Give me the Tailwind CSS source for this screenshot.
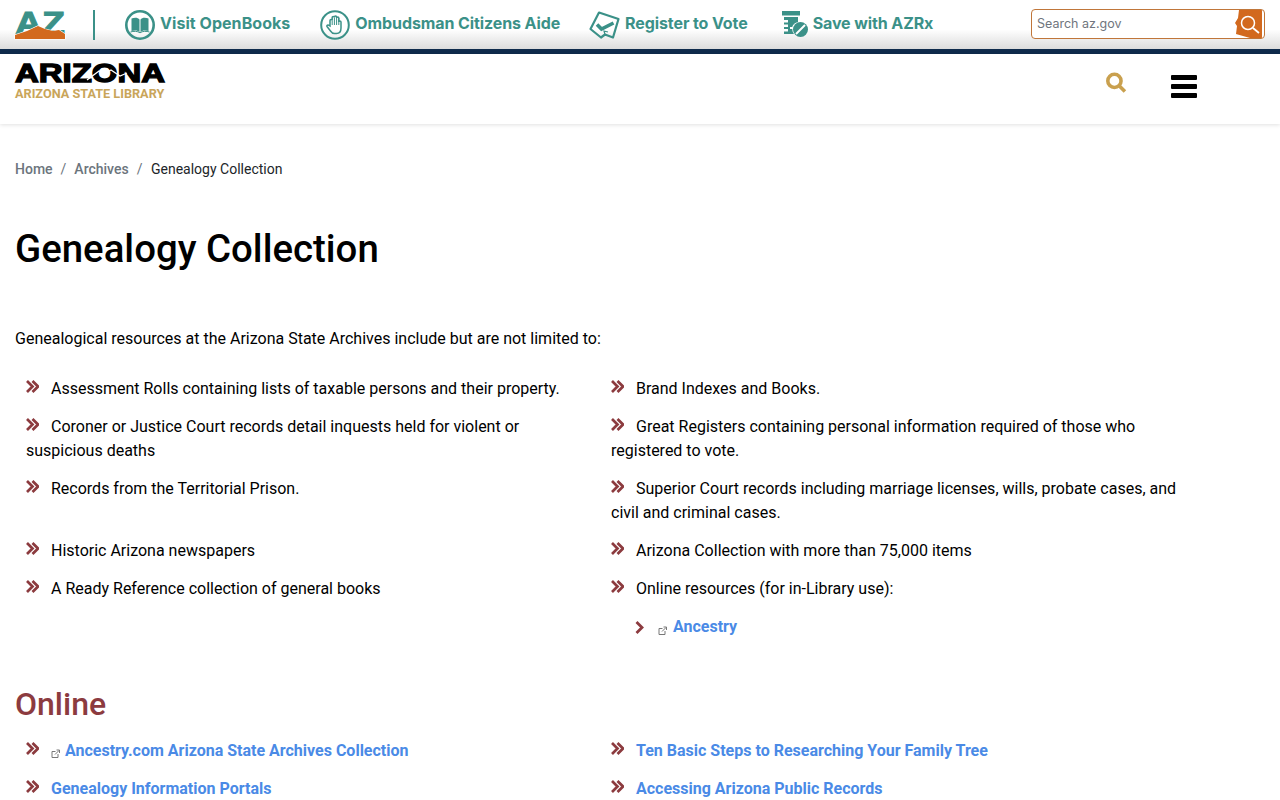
<!DOCTYPE html>
<html lang="en">
<head>
<meta charset="utf-8">
<title>Genealogy Collection</title>
<script src="https://cdn.jsdelivr.net/npm/@tailwindcss/browser@4"></script>
</head>
<body class="bg-white font-['Roboto',sans-serif] text-black overflow-hidden h-[800px]">
<div class="h-[49px] bg-gradient-to-b from-white from-60% to-[#dcdcdc] flex items-center pl-[15px] font-['Inter',sans-serif] font-bold text-[#3b9188] text-[16px] relative">
  <svg class="w-[50px] h-[28px] shrink-0 overflow-visible" viewBox="0 0 50 28">
    <text x="0" y="23" textLength="50" lengthAdjust="spacingAndGlyphs" font-family="Liberation Sans" font-weight="700" font-size="32" fill="#3b9188" stroke="#3b9188" stroke-width="1">AZ</text>
    <path d="M0 28V24L12 20 23 15 30 18 38 20 44 19 50 23V28Z" fill="#d2691e" stroke="#fff" stroke-width="1.200" paint-order="stroke"/>
  </svg>
  <div class="w-[2px] h-[30px] bg-[#3b9188] ml-[28px] mr-[30px] shrink-0"></div>
  <a class="flex items-center gap-[5px]">
    <svg class="w-[30px] h-[30px]" viewBox="0 0 30 30"><circle cx="15" cy="15" r="13.700" fill="none" stroke="#3b9188" stroke-width="2.600"/><path d="M6.500 8.500c3-1 6.500-1 8 1V22c-1.500-1.800-5-2-8-1ZM23.500 8.500c-3-1-6.500-1-8 1V22c1.500-1.800 5-2 8-1Z" fill="#3b9188"/><path d="M5.500 22c3-1 7-1 9.500.8 2.500-1.800 6.500-1.800 9.500-.8" fill="none" stroke="#3b9188" stroke-width="1"/></svg>
    <span class="mb-[3px] tracking-[0.05px]">Visit OpenBooks</span>
  </a>
  <a class="flex items-center gap-[5px] ml-[30px]">
    <svg class="w-[30px] h-[30px]" viewBox="0 0 30 30" fill="none" stroke="#3b9188"><circle cx="15" cy="15" r="13.800" stroke-width="2"/><path d="M10 16V10.500a1.100 1.100 0 0 1 2.200 0V7.500a1.100 1.100 0 0 1 2.200 0V7a1.100 1.100 0 0 1 2.200 0v1a1.100 1.100 0 0 1 2.200 0v4a1.100 1.100 0 0 1 2.200 0V18c0 3-1.500 5.500-4.500 5.500h-2c-2 0-3-1-4-2.500L7 16.500c-.7-1 1-2 2-1Z" stroke-width="1.500"/><path d="M12.200 10.500V15M14.400 7.500V15M16.600 7.500V15M18.800 8V15" stroke-width="1"/></svg>
    <span class="mb-[3px] tracking-[-0.1px]">Ombudsman Citizens Aide</span>
  </a>
  <a class="flex items-center gap-[5px] ml-[29px]">
    <svg class="w-[31px] h-[28px]" viewBox="0 0 31 28" fill="none" stroke="#3b9188"><path d="M10 1.500L29.500 8 24 26.500 16 23.500 12 26.500 1.500 18Z" stroke-width="2.200" stroke-linejoin="round"/><path d="M8 13.500l4.500 4.500 12-6" stroke-width="3.600"/><path d="M16 23.500l-1-3.500 4 1" stroke-width="1.200"/></svg>
    <span class="mb-[3px] tracking-[-0.1px]">Register to Vote</span>
  </a>
  <a class="flex items-center gap-[5px] ml-[33px]">
    <svg class="w-[27px] h-[27px]" viewBox="0 0 27 27" fill="#3b9188"><rect x="1" y="0" width="18" height="4.500"/><path d="M3 6h14v5c-3 .5-5 2.500-5.800 5H9v2h2.300c0 2 .5 3.500 1.700 5H3v-2.500h4V18H3v-2h4v-2.500H3v-2h4V9H3Z"/><circle cx="19.500" cy="18.500" r="7.500"/><path d="M15 23l9-9" stroke="#fff" stroke-width="2"/></svg>
    <span class="mb-[3px] tracking-[-0.1px]">Save with AZRx</span>
  </a>
  <div class="absolute left-[1031px] top-[9px] w-[234px] h-[30px] border border-[#c0763a] rounded-[4px] bg-white flex items-center pl-[5px] overflow-hidden font-['Inter',sans-serif] font-normal text-[12.500px] text-[#70757d]">
    <span>Search az.gov</span>
    <svg class="absolute right-[2px] top-0 w-[27px] h-[28px]" viewBox="0 0 27 28"><path d="M4 0H27V28H15L1 24 2 16 0 13 3 8Z" fill="#d2691e"/><circle cx="13" cy="13" r="6.500" fill="none" stroke="#fff" stroke-width="1.500"/><path d="M18 18l6 5" stroke="#fff" stroke-width="1.800"/></svg>
  </div>
</div>
<div class="h-[5px] bg-[#0f2b4c]"></div>
<header class="h-[70px] bg-white shadow-[0_1px_4px_rgba(0,0,0,0.12)] flex items-start pl-[15px] relative">
  <div class="pt-[9px] w-[150px]">
    <svg class="block w-[150px] h-[20px] overflow-visible" viewBox="0 0 150 20">
      <text x="0" y="19" textLength="150" lengthAdjust="spacingAndGlyphs" font-family="Liberation Sans" font-weight="700" font-size="26" stroke="#000" stroke-width="1.300" fill="#000">ARIZONA</text>
      <path d="M72 17L84 8 89 11 96 7 105 13 112 10" fill="none" stroke="#fff" stroke-width="1.300"/>
    </svg>
    <div class="text-[12.700px] leading-[14px] mt-[4px] font-bold text-[#c9a55a] whitespace-nowrap">ARIZONA STATE LIBRARY</div>
  </div>
  <svg class="absolute left-[1105px] top-[18px] w-[22px] h-[21px]" viewBox="0 0 20 20" fill="none" stroke="#c9a04e"><circle cx="8.500" cy="8.500" r="6.300" stroke-width="3.400"/><path d="M13 13l5.500 5.500" stroke-width="3.400"/></svg>
  <div class="absolute left-[1171px] top-[21px] w-[26px] flex flex-col gap-[4px]">
    <div class="h-[5px] bg-black rounded-[1px]"></div><div class="h-[5px] bg-black rounded-[1px]"></div><div class="h-[5px] bg-black rounded-[1px]"></div>
  </div>
</header>
<main class="px-[15px] w-[1200px] text-[16px] leading-[24px]">
  <nav class="flex items-center pt-[35px] h-[55px] text-[14px] leading-[20px]">
    <a class="font-medium text-[#6c757d]">Home</a><span class="px-[8px] text-[#6c757d]">/</span>
    <a class="font-medium text-[#6c757d]">Archives</a><span class="px-[8px] text-[#6c757d]">/</span>
    <span class="text-[#212529] ml-[0.500px]">Genealogy Collection</span>
  </nav>
  <h1 class="text-[38.400px] leading-[46px] font-medium mt-[47px] text-black">Genealogy Collection</h1>
  <p class="mt-[55px]">Genealogical resources at the Arizona State Archives include but are not limited to:</p>
  <ul class="grid grid-cols-2 w-[1170px] mt-[26px]">
    <li class="pl-[11px] pr-[8px] pb-[14px]"><svg class="inline-block w-[13px] h-[13px] mr-[12px] align-[1px]" viewBox="0 0 13 13" fill="none" stroke="#8c3b3f" stroke-width="2.700"><path d="M1 1l5.500 5.500L1 12M6.500 1L12 6.500 6.500 12"/></svg>Assessment Rolls containing lists of taxable persons and their property.</li>
    <li class="pl-[11px] pb-[14px]"><svg class="inline-block w-[13px] h-[13px] mr-[12px] align-[1px]" viewBox="0 0 13 13" fill="none" stroke="#8c3b3f" stroke-width="2.700"><path d="M1 1l5.500 5.500L1 12M6.500 1L12 6.500 6.500 12"/></svg>Brand Indexes and Books.</li>
    <li class="pl-[11px] pr-[50px] pb-[14px]"><svg class="inline-block w-[13px] h-[13px] mr-[12px] align-[1px]" viewBox="0 0 13 13" fill="none" stroke="#8c3b3f" stroke-width="2.700"><path d="M1 1l5.500 5.500L1 12M6.500 1L12 6.500 6.500 12"/></svg>Coroner or Justice Court records detail inquests held for violent or suspicious deaths</li>
    <li class="pl-[11px] pb-[14px]"><svg class="inline-block w-[13px] h-[13px] mr-[12px] align-[1px]" viewBox="0 0 13 13" fill="none" stroke="#8c3b3f" stroke-width="2.700"><path d="M1 1l5.500 5.500L1 12M6.500 1L12 6.500 6.500 12"/></svg>Great Registers containing personal information required of those who registered to vote.</li>
    <li class="pl-[11px] pb-[14px]"><svg class="inline-block w-[13px] h-[13px] mr-[12px] align-[1px]" viewBox="0 0 13 13" fill="none" stroke="#8c3b3f" stroke-width="2.700"><path d="M1 1l5.500 5.500L1 12M6.500 1L12 6.500 6.500 12"/></svg>Records from the Territorial Prison.</li>
    <li class="pl-[11px] pb-[14px]"><svg class="inline-block w-[13px] h-[13px] mr-[12px] align-[1px]" viewBox="0 0 13 13" fill="none" stroke="#8c3b3f" stroke-width="2.700"><path d="M1 1l5.500 5.500L1 12M6.500 1L12 6.500 6.500 12"/></svg>Superior Court records including marriage licenses, wills, probate cases, and civil and criminal cases.</li>
    <li class="pl-[11px] pb-[14px]"><svg class="inline-block w-[13px] h-[13px] mr-[12px] align-[1px]" viewBox="0 0 13 13" fill="none" stroke="#8c3b3f" stroke-width="2.700"><path d="M1 1l5.500 5.500L1 12M6.500 1L12 6.500 6.500 12"/></svg>Historic Arizona newspapers</li>
    <li class="pl-[11px] pb-[14px]"><svg class="inline-block w-[13px] h-[13px] mr-[12px] align-[1px]" viewBox="0 0 13 13" fill="none" stroke="#8c3b3f" stroke-width="2.700"><path d="M1 1l5.500 5.500L1 12M6.500 1L12 6.500 6.500 12"/></svg>Arizona Collection with more than 75,000 items</li>
    <li class="pl-[11px] pb-[14px]"><svg class="inline-block w-[13px] h-[13px] mr-[12px] align-[1px]" viewBox="0 0 13 13" fill="none" stroke="#8c3b3f" stroke-width="2.700"><path d="M1 1l5.500 5.500L1 12M6.500 1L12 6.500 6.500 12"/></svg>A Ready Reference collection of general books</li>
    <li class="pl-[11px]">
      <div class="pb-[14px]"><svg class="inline-block w-[13px] h-[13px] mr-[12px] align-[1px]" viewBox="0 0 13 13" fill="none" stroke="#8c3b3f" stroke-width="2.700"><path d="M1 1l5.500 5.500L1 12M6.500 1L12 6.500 6.500 12"/></svg>Online resources (for in-Library use):</div>
      <div class="pl-[24px] pb-[14px] flex items-center"><svg class="w-[9px] h-[13px] mr-[14px]" viewBox="0 0 9 13" fill="none" stroke="#8c3b3f" stroke-width="2.800"><path d="M1.500 1l5.500 5.500L1.500 12"/></svg><svg class="w-[9px] h-[9px] mr-[6px] mt-[6px]" viewBox="0 0 9 9" fill="none" stroke="#777" stroke-width="1"><path d="M7 5v3.500H1V2.500h3.500M4 5.500L8 1.500M5.500 1H8.500V4"/></svg><a class="font-bold text-[#4a8ae6]">Ancestry</a></div>
    </li>
  </ul>
  <h2 class="text-[32px] leading-[38px] font-medium text-[#8c3b3f] mt-[32px]">Online</h2>
  <ul class="grid grid-cols-2 w-[1170px] mt-[16px]">
    <li class="pl-[11px] pb-[14px]"><svg class="inline-block w-[13px] h-[13px] mr-[12px] align-[1px]" viewBox="0 0 13 13" fill="none" stroke="#8c3b3f" stroke-width="2.700"><path d="M1 1l5.500 5.500L1 12M6.500 1L12 6.500 6.500 12"/></svg><svg class="inline-block w-[9px] h-[9px] mr-[5px] align-[-2px]" viewBox="0 0 9 9" fill="none" stroke="#777" stroke-width="1"><path d="M7 5v3.500H1V2.500h3.500M4 5.500L8 1.500M5.500 1H8.500V4"/></svg><a class="font-bold text-[#4a8ae6]">Ancestry.com Arizona State Archives Collection</a></li>
    <li class="pl-[11px] pb-[14px]"><svg class="inline-block w-[13px] h-[13px] mr-[12px] align-[1px]" viewBox="0 0 13 13" fill="none" stroke="#8c3b3f" stroke-width="2.700"><path d="M1 1l5.500 5.500L1 12M6.500 1L12 6.500 6.500 12"/></svg><a class="font-bold text-[#4a8ae6]">Ten Basic Steps to Researching Your Family Tree</a></li>
    <li class="pl-[11px] pb-[14px]"><svg class="inline-block w-[13px] h-[13px] mr-[12px] align-[1px]" viewBox="0 0 13 13" fill="none" stroke="#8c3b3f" stroke-width="2.700"><path d="M1 1l5.500 5.500L1 12M6.500 1L12 6.500 6.500 12"/></svg><a class="font-bold text-[#4a8ae6]">Genealogy Information Portals</a></li>
    <li class="pl-[11px] pb-[14px]"><svg class="inline-block w-[13px] h-[13px] mr-[12px] align-[1px]" viewBox="0 0 13 13" fill="none" stroke="#8c3b3f" stroke-width="2.700"><path d="M1 1l5.500 5.500L1 12M6.500 1L12 6.500 6.500 12"/></svg><a class="font-bold text-[#4a8ae6]">Accessing Arizona Public Records</a></li>
  </ul>
</main>
</body>
</html>
